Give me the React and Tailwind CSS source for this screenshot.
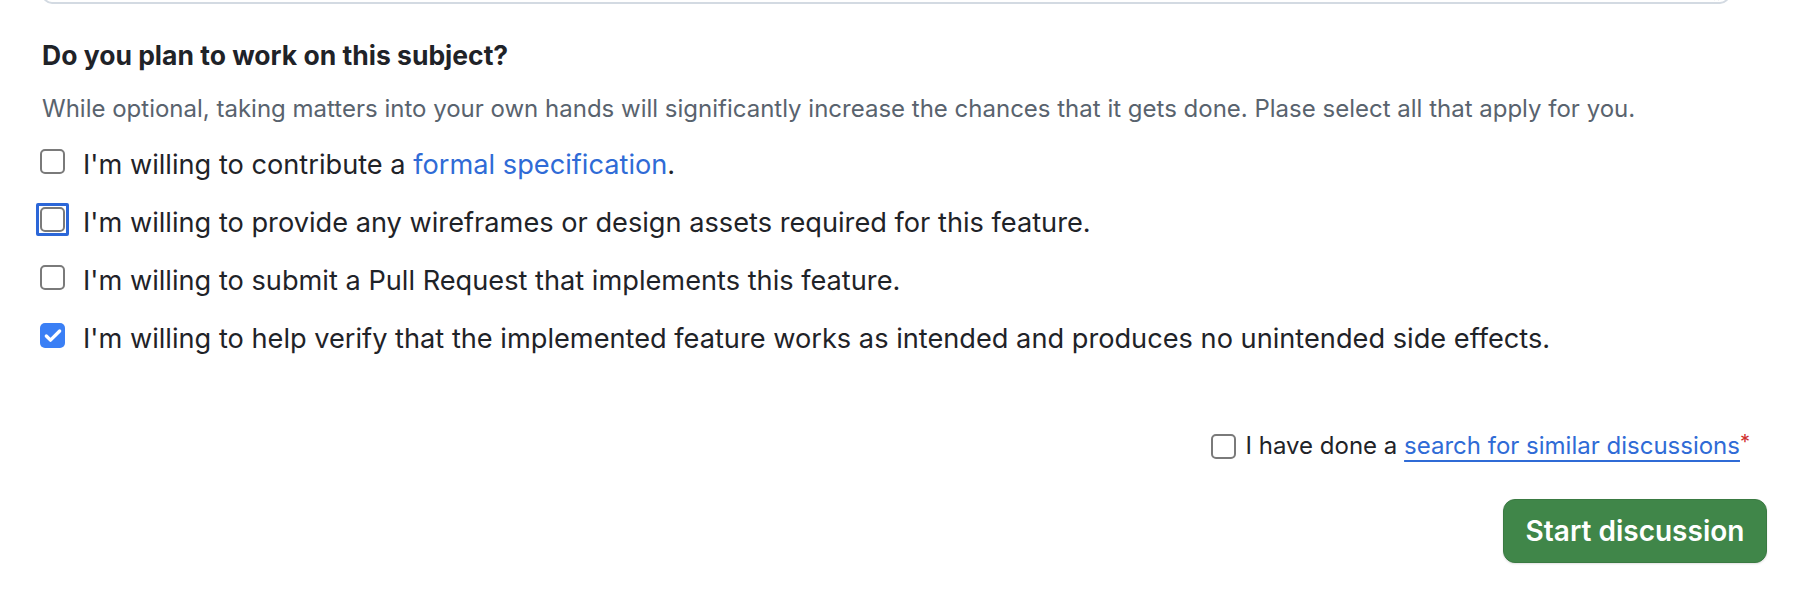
import { Check } from 'lucide-react';

const FONT = { fontFamily: 'Inter, "Liberation Sans", Arial, sans-serif' };

const OPTIONS = [
  { id: 'spec', label: <>I'm willing to contribute a <a href="#" className="text-[#2f6bd6]">formal specification</a>.</> },
  { id: 'design', label: "I'm willing to provide any wireframes or design assets required for this feature.", focused: true },
  { id: 'pr', label: "I'm willing to submit a Pull Request that implements this feature." },
  { id: 'verify', label: "I'm willing to help verify that the implemented feature works as intended and produces no unintended side effects.", checked: true },
];

function Box({ checked, focused }) {
  if (checked) {
    return (
      <span className="flex w-[25px] h-[25px] shrink-0 items-center justify-center rounded-[5px] bg-[#3a7ff5]">
        <Check size={20} strokeWidth={4} className="text-white" />
      </span>
    );
  }
  return (
    <span className="relative block w-[25px] h-[25px] shrink-0 rounded-[5px] border-2 border-[#7a7a7a] bg-white">
      {focused && <span className="absolute -inset-[6px] rounded-[2px] border-[3px] border-[#2c67d8]" />}
    </span>
  );
}

export default function App() {
  return (
    <div className="w-[1806px] h-[606px] overflow-hidden bg-white text-[#1f2328]" style={FONT}>
      {/* bottom of the textarea above */}
      <div className="relative ml-[42px] w-[1688px] h-[20px] -mt-[16px] rounded-[12px] border-2 border-[#d3dae2]">
        <svg className="absolute right-[6px] bottom-[1px]" width="10" height="6" viewBox="0 0 10 6">
          <path d="M2 5L9 0M6 5L9 3" stroke="#b8bec6" strokeWidth="1" />
        </svg>
      </div>

      <div className="pl-[40px] pt-[35px]">
        <h3 className="text-[26.5px] leading-[32px] font-bold pl-[2px]">Do you plan to work on this subject?</h3>
        <p className="mt-[22px] text-[24px] leading-[32px] text-[#59636e] pl-[2px]">
          While optional, taking matters into your own hands will significantly increase the chances that it gets done. Plase select all that apply for you.
        </p>

        <div className="mt-[22px] flex flex-col gap-[22px]">
          {OPTIONS.map(o => (
            <label key={o.id} className="flex items-start gap-[18px] text-[27.2px] leading-[36px]">
              <span className="mt-[2px]">
                <Box checked={o.checked} focused={o.focused} />
              </span>
              <span>{o.label}</span>
            </label>
          ))}
        </div>
      </div>

      <div className="mt-[73px] flex justify-end pr-[56px]">
        <label className="flex items-center gap-[10px] text-[24px] leading-[32px]">
          <Box />
          <span>
            I have done a{' '}
            <a href="#" className="text-[#2f6bd6] underline decoration-2 underline-offset-[6px]">
              search for similar discussions
            </a>
            <span className="relative -top-[5px] text-[#cf2f2f] text-[20px]">*</span>
          </span>
        </label>
      </div>

      <div className="mt-[36px] flex justify-end pr-[39px]">
        <button className="h-[64px] w-[264px] rounded-[12px] border border-[#3a7a42] bg-[#408649] text-white text-[28px] font-semibold shadow-[0_1px_2px_rgba(0,0,0,0.12)]">
          Start discussion
        </button>
      </div>
    </div>
  );
}
